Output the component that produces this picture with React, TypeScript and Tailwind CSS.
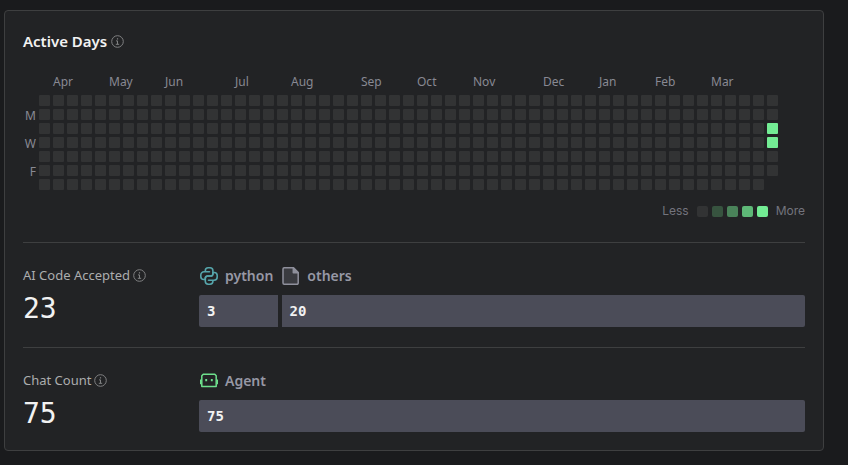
import type { ReactNode } from 'react';

const MONTHS = [
  { label: 'Apr', week: 1 },
  { label: 'May', week: 5 },
  { label: 'Jun', week: 9 },
  { label: 'Jul', week: 14 },
  { label: 'Aug', week: 18 },
  { label: 'Sep', week: 23 },
  { label: 'Oct', week: 27 },
  { label: 'Nov', week: 31 },
  { label: 'Dec', week: 36 },
  { label: 'Jan', week: 40 },
  { label: 'Feb', week: 44 },
  { label: 'Mar', week: 48 },
];

const WEEKDAYS = ['', 'M', '', 'W', '', 'F', ''];
const DAY_COUNT = 52 * 7 + 6;

const LEVELS = ['bg-[#323334]', 'bg-[#37533f]', 'bg-[#4a835a]', 'bg-[#5eb877]', 'bg-[#73ec94]'];

// day index (week * 7 + weekday) -> level
const ACTIVITY: Record<number, number> = {
  [52 * 7 + 2]: 4,
  [52 * 7 + 3]: 4,
};

interface Segment {
  label: string;
  value: number;
  icon: ReactNode;
}

function InfoIcon() {
  return (
    <svg className="h-[13px] w-[13px] shrink-0 text-[#808182]" viewBox="0 0 13 13" fill="none" stroke="currentColor" aria-hidden="true">
      <circle cx="6.5" cy="6.5" r="5.8" strokeWidth="1" />
      <path d="M6.5 3.2v1.3" strokeWidth="1.2" />
      <path d="M5 5.900h1.500v3.400M4.800 9.300h3.400" strokeWidth="1" />
    </svg>
  );
}

function PythonIcon() {
  return (
    <svg className="h-5 w-5" viewBox="0 0 20 20" fill="none" stroke="#56a5ab" strokeWidth="1.6" strokeLinecap="round" strokeLinejoin="round" aria-hidden="true">
      <path d="M10.500 5.800H5a3.200 3.200 0 0 0-3.200 3.200v1.500a3 3 0 0 0 3 3h1.500v-1.200A2.300 2.300 0 0 1 8.600 10h3a2.300 2.300 0 0 0 2.300-2.300v-3A2.900 2.900 0 0 0 11 1.800H9.200a2.900 2.900 0 0 0-2.900 2.900v1.100" />
      <path d="M9.500 14.200H15a3.200 3.200 0 0 0 3.200-3.200V9.500a3 3 0 0 0-3-3h-1.300v1.200A2.300 2.300 0 0 1 11.600 10h-3a2.300 2.300 0 0 0-2.300 2.300v3a2.900 2.900 0 0 0 2.900 2.900H11a2.900 2.900 0 0 0 2.900-2.900v-1.100" />
    </svg>
  );
}

function FileIcon() {
  return (
    <svg className="h-5 w-5" viewBox="0 0 20 20" fill="none" stroke="#8f909c" strokeWidth="1.5" strokeLinejoin="round" aria-hidden="true">
      <path d="M3.200 1.800h9.300l4.700 4.700V17a1.200 1.200 0 0 1-1.200 1.200H3.200A1.200 1.200 0 0 1 2 17V3a1.200 1.200 0 0 1 1.200-1.200z" fill="#3a3b40" />
      <path d="M12.300 2v4.800h4.900z" fill="#8f909c" />
    </svg>
  );
}

function AgentIcon() {
  return (
    <svg className="h-5 w-5" viewBox="0 0 20 20" fill="none" stroke="#6ee08d" strokeWidth="1.5" aria-hidden="true">
      <path d="M4.200 3.300h11.600l1.400 1.400v10.900H2.800V4.700z" strokeLinejoin="round" />
      <path d="M1.600 8.500v4.800M18.400 8.500v4.800" strokeWidth="1.200" />
      <path d="M7.200 8v2.200M12.800 8v2.200" strokeWidth="1.900" />
    </svg>
  );
}

function ActivityGrid() {
  return (
    <div className="grid grid-cols-[13px_repeat(53,11px)] gap-[3px] text-xs text-[#888993]">
      {MONTHS.map(({ label, week }) => (
        <span key={label} className="h-[18px] leading-4" style={{ gridRow: 1, gridColumn: `${week + 2} / span 3` }}>
          {label}
        </span>
      ))}
      {WEEKDAYS.map((name, day) => (
        <span key={day} className="h-[11px] text-right leading-[13px]" style={{ gridRow: day + 2, gridColumn: 1 }}>
          {name}
        </span>
      ))}
      {Array.from({ length: DAY_COUNT }, (_, index) => (
        <span
          key={index}
          className={`h-[11px] rounded-[1px] ${LEVELS[ACTIVITY[index] ?? 0]}`}
          style={{ gridRow: (index % 7) + 2, gridColumn: Math.floor(index / 7) + 2 }}
        />
      ))}
    </div>
  );
}

function StatRow({ title, total, segments }: { title: string; total: number; segments: Segment[] }) {
  return (
    <section className="flex border-t border-[#3e3f40] pt-[22px] pb-5 last:pb-[18px]">
      <div className="w-44 shrink-0">
        <h3 className="flex items-center gap-[3px] text-[13px] leading-5 text-[#acadae]">
          {title}
          <InfoIcon />
        </h3>
        <p className="mt-2 font-['DejaVu_Sans_Mono',monospace] text-[28px] leading-8 text-[#f2f2f2]">{total}</p>
      </div>
      <div className="min-w-0 flex-1">
        <ul className="flex gap-2 text-sm font-semibold text-[#9798a5]">
          {segments.map(({ label, icon }) => (
            <li key={label} className="flex items-center gap-[6px] leading-[22px]">
              {icon}
              {label}
            </li>
          ))}
        </ul>
        <div
          className="mt-2 grid gap-1 overflow-hidden rounded-xs"
          style={{ gridTemplateColumns: segments.map(s => `${s.value}fr`).join(' ') }}
        >
          {segments.map(({ label, value }) => (
            <div key={label} className="h-8 bg-[#4b4c58] px-2 font-['DejaVu_Sans_Mono',monospace] text-sm leading-8 font-bold text-[#f2f2f2]">
              {value}
            </div>
          ))}
        </div>
      </div>
    </section>
  );
}

export default function App() {
  return (
    <main className="min-h-screen bg-[#1a1b1d] pt-[10px] pr-6 pb-3 pl-1 font-['Noto_Sans',sans-serif]">
      <div className="rounded-sm border border-[#3e3f40] bg-[#222325] px-[18px] pt-[19px]">
        <h2 className="flex items-center gap-1 text-[15px] leading-[22px] font-semibold text-[#f2f2f2]">
          Active Days
          <InfoIcon />
        </h2>
        <div className="mt-[22px] overflow-hidden">
          <ActivityGrid />
        </div>
        <div className="mt-[13px] mb-[23px] flex items-center justify-end gap-2 font-[Inter,sans-serif] text-xs leading-4 text-[#73747d]">
          <span>Less</span>
          <div className="flex gap-1">
            {LEVELS.map(level => (
              <span key={level} className={`h-[11px] w-[11px] rounded-xs ${level}`} />
            ))}
          </div>
          <span>More</span>
        </div>
        <StatRow
          title="AI Code Accepted"
          total={23}
          segments={[
            { label: 'python', value: 3, icon: <PythonIcon /> },
            { label: 'others', value: 20, icon: <FileIcon /> },
          ]}
        />
        <StatRow title="Chat Count" total={75} segments={[{ label: 'Agent', value: 75, icon: <AgentIcon /> }]} />
      </div>
    </main>
  );
}
